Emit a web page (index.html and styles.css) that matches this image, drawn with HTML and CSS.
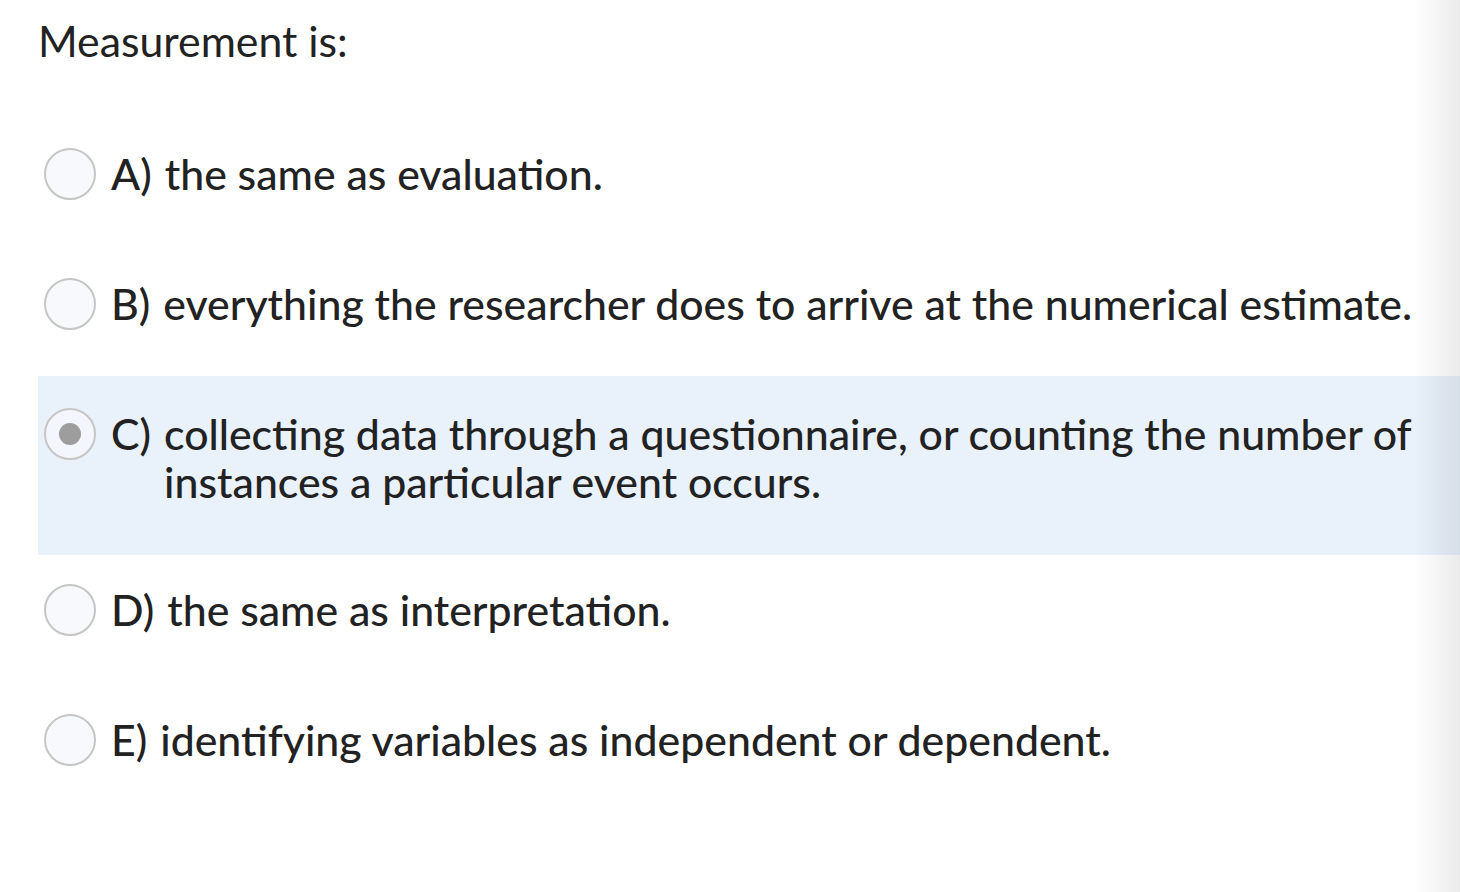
FILE: index.html
```html
<!DOCTYPE html>
<html lang="en">
<head>
    <meta charset="UTF-8">
    <meta name="viewport" content="width=device-width, initial-scale=1.0">
    <title>Quiz Question</title>
    <link rel="stylesheet" href="styles.css">
</head>
<body>
    <div class="question">
        <p class="question-text">Measurement is:</p>
        <div class="answers">
            <label class="answer">
                <span class="radio"></span>
                <span class="letter">A)</span>
                <span class="answer-text">the same as evaluation.</span>
            </label>
            <label class="answer">
                <span class="radio"></span>
                <span class="letter">B)</span>
                <span class="answer-text">everything the researcher does to arrive at the numerical estimate.</span>
            </label>
            <label class="answer selected">
                <span class="radio"></span>
                <span class="letter">C)</span>
                <span class="answer-text">collecting data through a questionnaire, or counting the number of instances a particular event occurs.</span>
            </label>
            <label class="answer">
                <span class="radio"></span>
                <span class="letter">D)</span>
                <span class="answer-text">the same as interpretation.</span>
            </label>
            <label class="answer">
                <span class="radio"></span>
                <span class="letter">E)</span>
                <span class="answer-text">identifying variables as independent or dependent.</span>
            </label>
        </div>
    </div>
    <div class="edge-shade"></div>
</body>
</html>
```

FILE: styles.css
```css
body { margin: 0; padding: 0; background-color: #fff; color: #222; font-family: Lato, "Open Sans", sans-serif; overflow: hidden; }
.question { padding: 17px 0 0 38px; }
.question-text { margin: 0; font-size: 42.8px; line-height: 48px; font-weight: 400; }
.answers { margin-top: 53px; }
.answer { display: flex; align-items: flex-start; padding: 32px 0 48px 6px; font-size: 42.8px; line-height: 48px; font-weight: 500; cursor: pointer; }
.answer.selected { background-color: #e9f1fb; margin: -2px 0 -1px; padding-top: 34px; padding-bottom: 49px; }
.radio { flex: none; width: 48px; height: 48px; margin: -2px 15px 0 0; border: 2px solid #c6c6c6; border-radius: 50%; background-color: #f7f9fd; display: flex; align-items: center; justify-content: center; }
.answer.selected .radio { background-color: #f3f7fd; }
.answer.selected .radio::after { content: ""; width: 22px; height: 22px; border-radius: 50%; background-color: #9d9d9d; }
.letter { flex: none; margin-right: 13px; }
.answer-text { flex: 1; padding-right: 30px; }
.edge-shade { position: fixed; top: 0; right: 0; width: 46px; height: 100%; background: linear-gradient(to right, rgba(0,0,0,0), rgba(0,0,0,0.08)); pointer-events: none; }
```
